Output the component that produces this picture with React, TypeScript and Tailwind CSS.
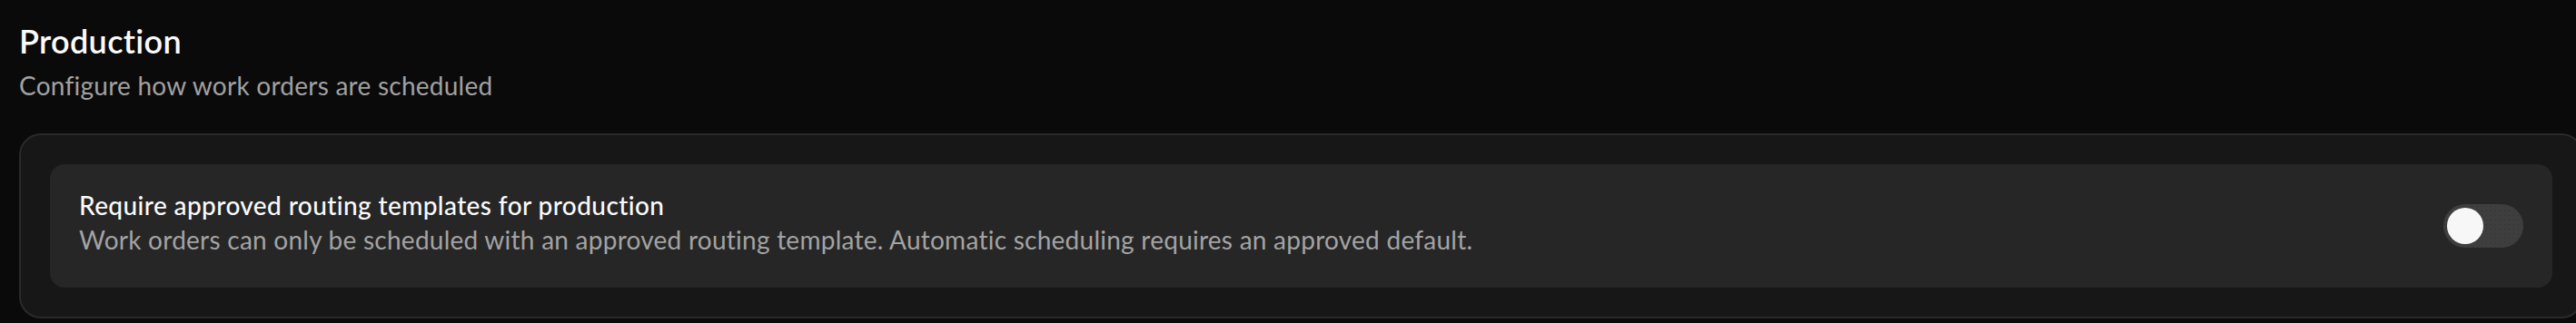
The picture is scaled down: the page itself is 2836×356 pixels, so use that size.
import { useState } from "react";

const font = { fontFamily: "Lato, 'Open Sans', sans-serif" };

const Toggle = ({ on, onChange }: { on: boolean; onChange: (v: boolean) => void }) => (
  <button
    onClick={() => onChange(!on)}
    className={`relative h-[48px] w-[88px] shrink-0 rounded-full p-[4px] ${
      on ? "bg-[#e5e5e5]" : "bg-[#3e3e3e]"
    }`}
  >
    {/* dotted texture on the track */}
    <span className="absolute inset-0 rounded-full bg-[radial-gradient(circle,#2c2c2c_0.8px,transparent_1px)] bg-[length:5px_5px] opacity-70"></span>
    <span
      className={`relative block h-[40px] w-[40px] rounded-full bg-[#f7f7f7] transition-transform ${
        on ? "translate-x-[40px] bg-[#171717]" : "translate-x-0"
      }`}
    ></span>
  </button>
);

export default function App() {
  const [required, setRequired] = useState(false);

  return (
    <div className="min-h-[356px] w-full overflow-hidden bg-[#0a0a0a] pl-[21px] pt-[17px]" style={font}>
      {/* Section header */}
      <h2 className="text-[36px] leading-[56px] font-semibold tracking-[0.35px] text-[#fafafa]">
        Production
      </h2>
      <p className="mt-[1px] text-[28px] leading-[40px] tracking-[0.25px] text-[#a1a1a1]">
        Configure how work orders are scheduled
      </p>

      {/* Settings card */}
      <div className="mt-[33px] w-[2823px] rounded-[24px] border-2 border-[#2a2a2a] bg-[#171717] p-[32px]">
        <div className="flex h-[136px] items-center justify-between rounded-[16px] bg-[#262626] px-[32px]">
          <div className="mb-[8px] flex flex-col">
            <span className="text-[28px] leading-[38px] font-medium tracking-[0.4px] text-[#fafafa]">
              Require approved routing templates for production
            </span>
            <span className="text-[28px] leading-[38px] tracking-[0.25px] text-[#a3a3a3]">
              Work orders can only be scheduled with an approved routing template. Automatic
              scheduling requires an approved default.
            </span>
          </div>
          <Toggle on={required} onChange={setRequired} />
        </div>
      </div>
    </div>
  );
}
